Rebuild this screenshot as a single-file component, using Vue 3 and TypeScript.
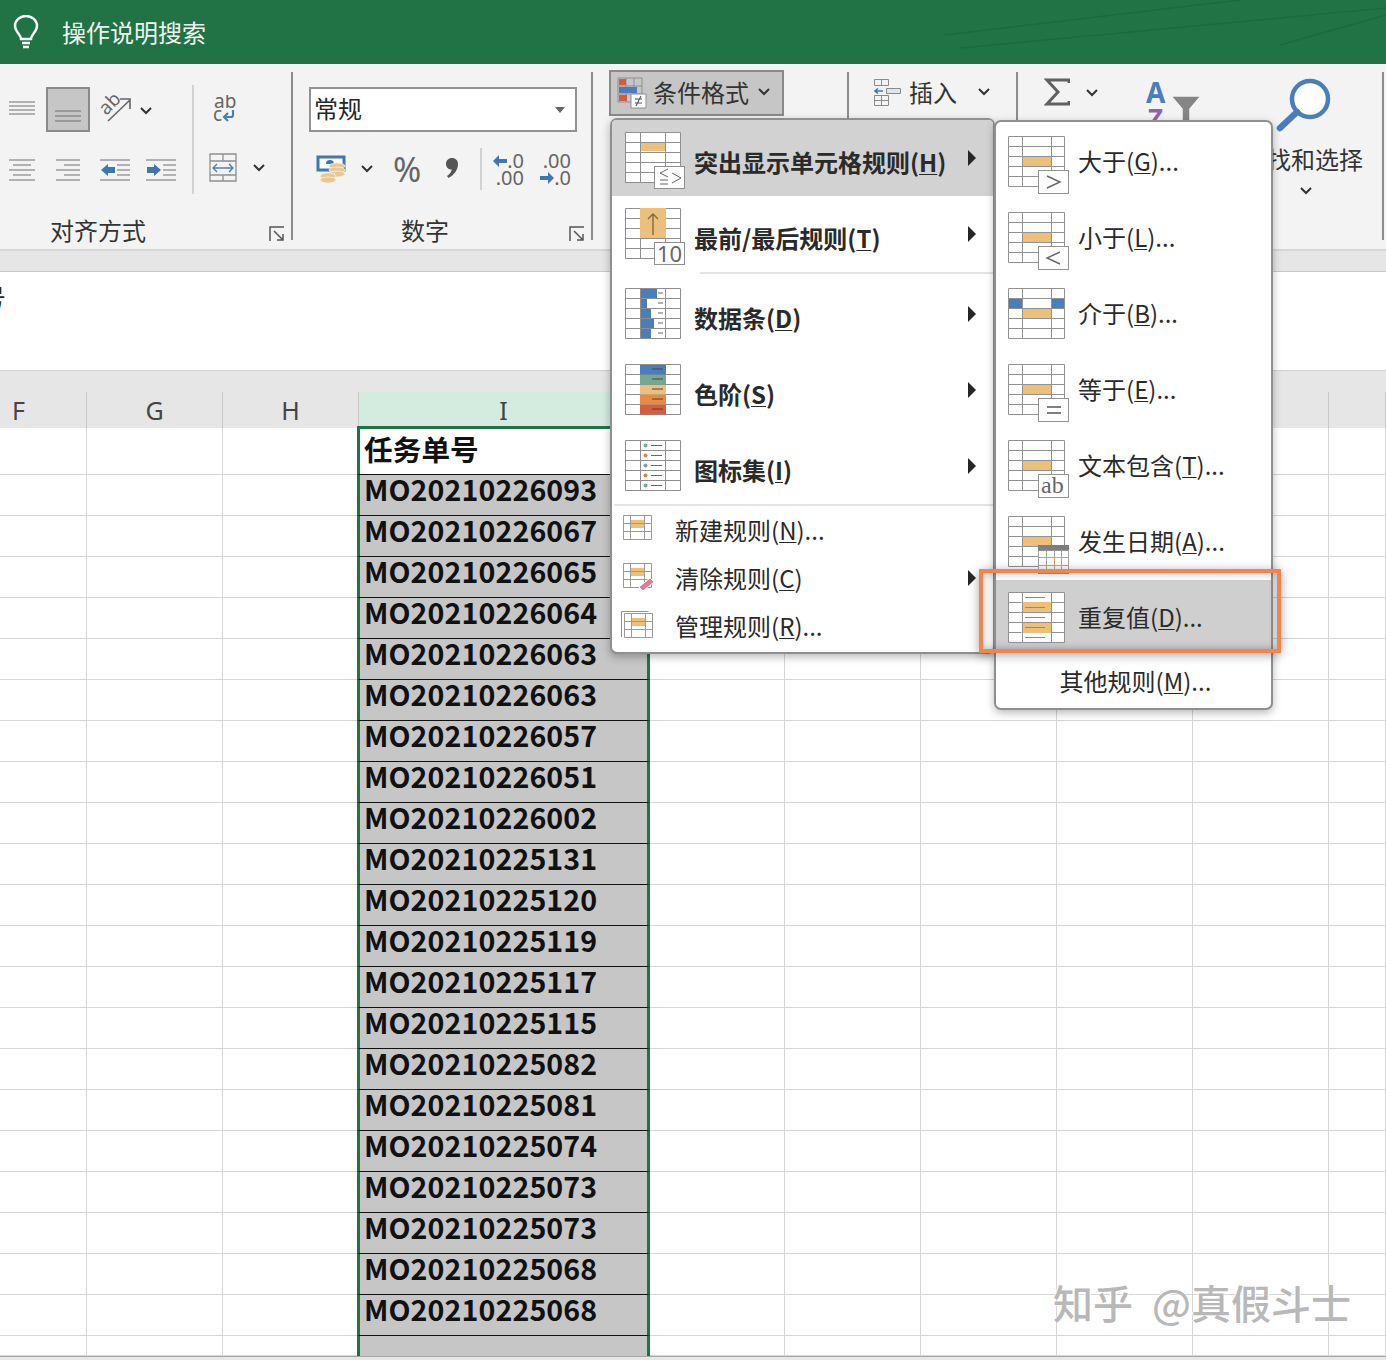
<script setup lang="ts">
interface MenuItem { label: string; key: string; tail: string; icon: string; arrow?: boolean }

const mainItems: MenuItem[] = [
  { label: '突出显示单元格规则(', key: 'H', tail: ')', icon: 'cells', arrow: true },
  { label: '最前/最后规则(', key: 'T', tail: ')', icon: 'top', arrow: true },
  { label: '数据条(', key: 'D', tail: ')', icon: 'bars', arrow: true },
  { label: '色阶(', key: 'S', tail: ')', icon: 'scale', arrow: true },
  { label: '图标集(', key: 'I', tail: ')', icon: 'dots', arrow: true },
]
const subItems: MenuItem[] = [
  { label: '大于(', key: 'G', tail: ')...', icon: 'gt' },
  { label: '小于(', key: 'L', tail: ')...', icon: 'lt' },
  { label: '介于(', key: 'B', tail: ')...', icon: 'between' },
  { label: '等于(', key: 'E', tail: ')...', icon: 'eq' },
  { label: '文本包含(', key: 'T', tail: ')...', icon: 'ab' },
  { label: '发生日期(', key: 'A', tail: ')...', icon: 'date' },
  { label: '重复值(', key: 'D', tail: ')...', icon: 'dup' },
]
const smallItems: MenuItem[] = [
  { label: '新建规则(', key: 'N', tail: ')...', icon: 'new' },
  { label: '清除规则(', key: 'C', tail: ')', icon: 'clear', arrow: true },
  { label: '管理规则(', key: 'R', tail: ')...', icon: 'manage' },
]

const columns = [
  { name: 'F', w: 87 }, { name: 'G', w: 136 }, { name: 'H', w: 136 }, { name: 'I', w: 290 },
  { name: 'J', w: 136 }, { name: 'K', w: 136 }, { name: 'L', w: 136 }, { name: 'M', w: 136 },
  { name: 'N', w: 136 }, { name: '', w: 57 },
]
const gridCols = columns.map(c => c.w + 'px').join(' ')

const codes = ['MO20210226093','MO20210226067','MO20210226065','MO20210226064','MO20210226063','MO20210226063','MO20210226057','MO20210226051','MO20210226002','MO20210225131','MO20210225120','MO20210225119','MO20210225117','MO20210225115','MO20210225082','MO20210225081','MO20210225074','MO20210225073','MO20210225073','MO20210225068','MO20210225068']
const rows = [
  { text: '任务单号', kind: 'head' },
  ...codes.map(text => ({ text, kind: 'data' })),
  { text: '', kind: 'last' },
]
const yellow = '#ebc07a'
const blueBars = [16, 6, 10, 13, 10]
const scaleColors = ['#4a7ebb', '#72a991', '#ebc07a', '#ec8a3b', '#d95b3f']
const dotColors = ['#74a596', '#d0844f', '#74a596', '#d0844f', '#74a596']
</script>

<template>
  <div class="page">
    <header class="titlebar">
      <svg class="bulb" width="28" height="34" viewBox="0 0 28 34" fill="none" stroke="#fff" stroke-width="2.4">
        <path d="M9 24c0-5-6-7-6-13a11 10 0 0 1 22 0c0 6-6 8-6 13z" />
        <path d="M10 28h8M11 32h6" />
      </svg>
      <span class="search">操作说明搜索</span>
      <svg class="decor" width="456" height="64" viewBox="0 0 456 64" fill="none" stroke="#1c6a3f" stroke-width="1.5">
        <path d="M15 35 310 0M30 48 456 8M350 45 456 15" />
      </svg>
    </header>

    <section class="ribbon">
      <div class="group align-group">
        <div class="tools">
          <div class="tool-col">
            <div class="tool-row row-top">
              <svg class="t1" width="26" height="16" viewBox="0 0 26 16" stroke="#9c9c9c" stroke-width="1.4"><path d="M0 2H26M0 6H26M0 10H26M0 14H26" /></svg>
              <div class="pressed">
                <svg width="26" height="16" viewBox="0 0 26 16" stroke="#8a8a8a" stroke-width="1.4"><path d="M0 2H26M0 7H26M0 12H26" /></svg>
              </div>
              <svg class="t3" width="32" height="30" viewBox="0 0 32 30" fill="none">
                <text x="0" y="18" font-size="19" fill="#666" transform="rotate(-45 9 13)" class="svg-text">ab</text>
                <path d="M8 28 30 7M20 6h10v10" stroke="#666" stroke-width="1.6" />
              </svg>
              <svg class="chev t4" width="12" height="8" viewBox="0 0 12 8"><path d="M1 1l5 5 5-5" /></svg>
            </div>
            <div class="tool-row row-bottom">
              <svg width="26" height="24" viewBox="0 0 26 24" stroke="#9c9c9c" stroke-width="1.4"><path d="M0 2H26M4 7H22M0 12H26M4 17H22M0 22H26" /></svg>
              <svg class="m21" width="24" height="24" viewBox="0 0 24 24" stroke="#9c9c9c" stroke-width="1.4"><path d="M0 2H24M8 7H24M0 12H24M8 17H24M0 22H24" /></svg>
              <svg class="m20" width="30" height="24" viewBox="0 0 30 24" fill="none">
                <path d="M0 2H30M17 7H30M17 12H30M17 17H30M0 22H30" stroke="#9c9c9c" stroke-width="1.4" />
                <path d="M8 6 1 12l7 6v-3h7V9H8z" fill="#3f78b0" />
              </svg>
              <svg class="m16" width="30" height="24" viewBox="0 0 30 24" fill="none">
                <path d="M0 2H30M17 7H30M17 12H30M17 17H30M0 22H30" stroke="#9c9c9c" stroke-width="1.4" />
                <path d="M8 6l7 6-7 6v-3H1V9h7z" fill="#3f78b0" />
              </svg>
            </div>
          </div>
          <div class="tool-side">
            <svg class="wrap" width="24" height="28" viewBox="0 0 24 28" fill="none">
              <text x="1" y="13" font-size="19" fill="#666" class="svg-text">ab</text>
              <text x="0" y="26" font-size="19" fill="#666" class="svg-text">c</text>
              <path d="M20 15v5a2 2 0 0 1-2 2h-7m4-4-4 4 4 4" stroke="#4a7ebb" stroke-width="2.2" />
            </svg>
            <div class="merge-row">
              <svg width="28" height="30" viewBox="0 0 28 30" fill="none">
                <path d="M1 1h26v27H1zM1 8h26M1 22h26M14 1v7M14 22v6" stroke="#8f8f8f" stroke-width="1.3" />
                <path d="M4 15h20M8 11l-4 4 4 4M20 11l4 4-4 4" stroke="#4a7ebb" stroke-width="1.3" />
              </svg>
              <svg class="chev" width="12" height="8" viewBox="0 0 12 8"><path d="M1 1l5 5 5-5" /></svg>
            </div>
          </div>
        </div>
        <div class="group-label label-align">
          <span>对齐方式</span>
          <svg class="launch" width="16" height="16" viewBox="0 0 16 16" fill="none" stroke="#555" stroke-width="1.5"><path d="M1 15V1h14M5 5l9 9M14 8v6H8" /></svg>
        </div>
      </div>

      <div class="group number-group">
        <div class="combo">
          <span>常规</span>
          <svg width="10" height="6" viewBox="0 0 10 6"><path d="M0 0h10L5 6z" fill="#666" /></svg>
        </div>
        <div class="num-row">
          <svg class="money" width="32" height="30" viewBox="0 0 32 30" fill="none">
            <path d="M2 2h26v13H2z" fill="#fff" stroke="#3f78b0" stroke-width="3" />
            <path d="M10 9a4 4 0 0 1 8 0z" fill="#3f78b0" />
            <g fill="#e9c795" stroke="#f7f0e2" stroke-width=".8">
              <ellipse cx="21" cy="11" rx="8" ry="3" />
              <ellipse cx="21" cy="15" rx="8" ry="3" />
              <ellipse cx="21" cy="19" rx="8" ry="3" />
              <ellipse cx="12" cy="21" rx="8" ry="3" />
              <ellipse cx="12" cy="25" rx="8" ry="3" />
            </g>
          </svg>
          <svg class="chev n-chev" width="12" height="8" viewBox="0 0 12 8"><path d="M1 1l5 5 5-5" /></svg>
          <span class="percent">%</span>
          <svg class="comma" width="12" height="20" viewBox="0 0 12 20"><path d="M6 0c3.500 0 6 2.500 6 6 0 6-4 11-9.500 14L1 18c3-2 4.500-4.500 4.800-6.500C2.500 11.500 0 9.500 0 6c0-3.500 2.500-6 6-6z" fill="#555" /></svg>
          <i class="inner-sep"></i>
          <div class="dec dec-a">
            <div><svg width="14" height="12" viewBox="0 0 14 12"><path d="M6 0 0 6l6 6V8h8V4H6z" fill="#3f78b0" /></svg>.0</div>
            <div>.00</div>
          </div>
          <div class="dec dec-b">
            <div>.00</div>
            <div><svg width="14" height="12" viewBox="0 0 14 12"><path d="m8 0 6 6-6 6V8H0V4h8z" fill="#3f78b0" /></svg>.0</div>
          </div>
        </div>
        <div class="group-label label-number">
          <span>数字</span>
          <svg class="launch" width="16" height="16" viewBox="0 0 16 16" fill="none" stroke="#555" stroke-width="1.5"><path d="M1 15V1h14M5 5l9 9M14 8v6H8" /></svg>
        </div>
      </div>

      <div class="group styles-group">
        <button class="cond">
          <svg width="32" height="32" viewBox="0 0 32 32" fill="none">
            <path d="M1 1h24v24H1zM1 9h24M1 17h24M9 1v24M17 1v24" stroke="#8f8f8f" />
            <path d="M2 2h7v6H2z" fill="#d9593d" />
            <path d="M2 10h18v6H2z" fill="#4a7ebb" />
            <path d="M2 18h8v6H2z" fill="#d9593d" />
            <path d="M14 17h15v14H14z" fill="#fff" stroke="#8f8f8f" />
            <path d="M18 22h7M18 26h7M24 19l-5 10" stroke="#555" stroke-width="1.100" />
          </svg>
          <span>条件格式</span>
          <svg class="chev" width="12" height="8" viewBox="0 0 12 8"><path d="M1 1l5 5 5-5" /></svg>
        </button>
      </div>

      <div class="group cells-group">
        <div class="insert">
          <svg width="27" height="27" viewBox="0 0 27 27" fill="none">
            <path d="M.5.5h14v6H.5zM7.500.5v6M.5 16.500h14v10H.5zM.5 21.500h14M7.500 16.500v10" stroke="#8a8a8a" />
            <path d="M12.500 9.500h14v5h-14z" fill="#dfe6ee" stroke="#8a8a8a" />
            <path d="M1 12h8M4 9.500 1 12l3 2.500" stroke="#3f78b0" stroke-width="1.600" />
          </svg>
          <span>插入</span>
          <svg class="chev" width="12" height="8" viewBox="0 0 12 8"><path d="M1 1l5 5 5-5" /></svg>
        </div>
      </div>

      <div class="group edit-group">
        <svg class="sigma" width="26" height="28" viewBox="0 0 26 28" fill="none" stroke="#606060" stroke-width="3"><path d="M25 5V2H3l11 12L3 26h22v-3" /></svg>
        <svg class="chev sum-chev" width="12" height="8" viewBox="0 0 12 8"><path d="M1 1l5 5 5-5" /></svg>
        <div class="sort">
          <span class="sort-a">A</span>
          <span class="sort-z">Z</span>
          <svg class="funnel" width="32" height="34" viewBox="0 0 32 34"><path d="M1 1h30L20 14v20h-8V14z" fill="#858585" stroke="#f3f3f3" stroke-width="1.500" /></svg>
        </div>
        <div class="find">
          <svg width="60" height="56" viewBox="0 0 60 56" fill="none">
            <circle cx="37" cy="21" r="18" fill="#fff" stroke="#4a7ebb" stroke-width="4.500" />
            <path d="M24 34 7 50" stroke="#4a7ebb" stroke-width="6.500" stroke-linecap="round" />
          </svg>
          <span>查找和选择</span>
          <svg class="chev" width="12" height="8" viewBox="0 0 12 8"><path d="M1 1l5 5 5-5" /></svg>
        </div>
      </div>
    </section>

    <div class="band-a"></div>
    <div class="formula"><span>任务单号</span></div>
    <div class="band-b"></div>

    <div class="col-head" :style="{ gridTemplateColumns: gridCols }">
      <div v-for="c in columns" :key="c.name" class="head-cell" :class="{ on: c.name === 'I' }">{{ c.name }}</div>
    </div>

    <div class="sheet" :style="{ gridTemplateColumns: gridCols }">
      <template v-for="(r, ri) in rows" :key="ri">
        <div
          v-for="c in columns"
          :key="c.name"
          class="cell"
          :class="[r.kind, { sel: c.name === 'I' }]"
        >
          <template v-if="c.name === 'I'">{{ r.text }}</template>
        </div>
      </template>
    </div>
    <div class="sheet-end"></div>

    <!-- left dropdown -->
    <div class="menu menu-main">
      <template v-for="(m, i) in mainItems" :key="m.label">
        <div v-if="i === 2" class="div-short"></div>
        <div class="item" :class="{ hot: i === 0 }">
          <svg class="ic" width="62" height="58" viewBox="0 0 62 58" fill="none">
            <rect x=".5" y=".5" width="55" height="50" fill="#fff" />
            <rect v-if="m.icon === 'cells'" x="15" y="10" width="25" height="9" :fill="yellow" />
            <path d="M.5.5h55v50H.5zM.5 10.500h55M.5 20.500h55M.5 30.500h55M.5 40.500h55M15.500.5v50M40.500.5v50" stroke="#8f8f8f" />
            <rect v-if="m.icon === 'top'" x="15" y="0" width="26" height="30" :fill="yellow" />
            <template v-if="m.icon === 'bars'">
              <rect v-for="(w, b) in blueBars" :key="b" x="16" :y="b * 10 + 1" :width="w" height="9" fill="#4a7ebb" />
            </template>
            <template v-if="m.icon === 'scale'">
              <rect v-for="(col, b) in scaleColors" :key="b" x="15" :y="b * 10 + 1" width="26" height="9.500" :fill="col" />
            </template>
            <template v-if="m.icon === 'cells' || m.icon === 'top'">
              <rect x="29.500" y="34.500" width="30" height="22" fill="#fff" stroke="#8f8f8f" />
            </template>
            <path v-if="m.icon === 'cells'" d="M43 37l-8 4 8 4M35 48h8M35 52h8M47 41l9 5-9 5" stroke="#666" />
            <path v-if="m.icon === 'top'" d="M28 27V6M23 11l5-5 5 5" stroke="#7a6a50" stroke-width="1.400" />
            <text v-if="m.icon === 'top'" x="32" y="54" font-size="22" fill="#666" class="svg-text">10</text>
            <path v-if="m.icon === 'bars'" d="M33 5h5M33 15h5M33 25h5M33 35h5M33 45h5" stroke="#666" />
            <path v-if="m.icon === 'scale'" d="M27 5h11M27 15h11M27 25h11M27 35h11M27 45h11" stroke="#444" />
            <template v-if="m.icon === 'dots'">
              <circle v-for="(col, b) in dotColors" :key="b" cx="20.500" :cy="5.500 + b * 10" r="2" :fill="col" />
              <path d="M26 5.500h11M26 15.500h11M26 25.500h11M26 35.500h11M26 45.500h11" stroke="#666" />
            </template>
          </svg>
          <span class="txt bold">{{ m.label }}<u>{{ m.key }}</u>{{ m.tail }}</span>
          <i class="tri"></i>
        </div>
      </template>
      <div class="div-full"></div>
      <div v-for="m in smallItems" :key="m.label" class="small">
        <svg class="sm-ic" width="36" height="30" viewBox="0 0 36 30" fill="none">
          <path v-if="m.icon === 'manage'" d="M2.500 26V.5h27" stroke="#8f8f8f" />
          <g :transform="m.icon === 'manage' ? 'translate(1 2)' : ''">
            <rect x="11" y="5" width="14" height="8" :fill="yellow" />
            <path d="M4.500.5h28v24h-28zM4.500 8.500h28M4.500 16.500h28M11.500.5v24M25.500.5v24" stroke="#999" />
          </g>
          <path v-if="m.icon === 'clear'" d="m20 24 11-9 4 4-11 9z" fill="#e6788f" stroke="#fff" />
        </svg>
        <span class="txt">{{ m.label }}<u>{{ m.key }}</u>{{ m.tail }}</span>
        <i v-if="m.arrow" class="tri"></i>
      </div>
    </div>

    <!-- right fly-out -->
    <div class="menu menu-sub">
      <div v-for="m in subItems" :key="m.label" class="sub" :class="{ hot: m.icon === 'dup' }">
        <svg class="ic" width="64" height="60" viewBox="0 0 64 60" fill="none">
          <rect x=".5" y=".5" width="56" height="50" fill="#fff" />
          <template v-if="m.icon === 'dup'">
            <rect x="14" y="10" width="29" height="10" :fill="yellow" />
            <rect x="14" y="31" width="29" height="10" :fill="yellow" />
          </template>
          <rect v-else x="14" y="20" width="29" height="10" :fill="yellow" />
          <template v-if="m.icon === 'between'">
            <rect x="0" y="10" width="14" height="10" fill="#4a7ebb" />
            <rect x="43" y="10" width="14" height="10" fill="#4a7ebb" />
          </template>
          <path v-if="m.icon === 'dup'" d="M.5.5h56v50H.5zM14.500.5v50M43.500.5v50M.5 10.500h13M43.500 10.500h13M.5 20.500h56M.5 30.500h56M.5 40.500h13M43.500 40.500h13" stroke="#929292" />
          <path v-else d="M.5.5h56v50H.5zM.5 10.500h56M.5 20.500h56M.5 30.500h56M.5 40.500h56M14.500.5v50M43.500.5v50" stroke="#929292" />
          <path v-if="m.icon === 'dup'" d="M17 5.500h20M17 15.500h20M17 25.500h20M17 35.500h20M17 45.500h20" stroke="#8a8a8a" />
          <template v-if="['gt','lt','eq','ab','date'].includes(m.icon)">
            <rect x="30.500" y="34.500" width="30" height="23" fill="#fff" stroke="#929292" />
          </template>
          <path v-if="m.icon === 'gt'" d="m39 40 13 6-13 6" stroke="#666" stroke-width="1.400" />
          <path v-if="m.icon === 'lt'" d="m52 40-13 6 13 6" stroke="#666" stroke-width="1.400" />
          <path v-if="m.icon === 'eq'" d="M39 43h14M39 49h14" stroke="#555" stroke-width="1.600" />
          <text v-if="m.icon === 'ab'" x="33" y="53" font-size="24" fill="#666" class="svg-serif">ab</text>
          <template v-if="m.icon === 'date'">
            <rect x="30" y="29" width="31" height="5" fill="#7e7e7e" />
            <path d="M30.500 34v23h30V34M30.500 41.500h30M30.500 49.500h30M38.500 34v23M46.500 34v23M53.500 34v23" stroke="#a5a5a5" />
            <rect x="46.500" y="41.500" width="7" height="8" fill="#fff" stroke="#d9a441" />
          </template>
        </svg>
        <span class="txt">{{ m.label }}<u>{{ m.key }}</u>{{ m.tail }}</span>
      </div>
      <div class="other"><span class="txt">其他规则(<u>M</u>)...</span></div>
    </div>

    <div class="focus-frame"></div>

    <div class="watermark">知乎 @真假斗士</div>
  </div>
</template>

<style>
html, body { margin: 0; background: #fff; overflow: hidden; }
</style>

<style scoped>
.page {
  position: relative;
  width: 1386px;
  height: 1360px;
  overflow: hidden;
  background: #fff;
  font-family: "Noto Sans CJK SC", "Noto Sans", sans-serif;
  color: #262626;
}
svg { display: block; flex: none; }
.svg-text { font-family: "Noto Sans", sans-serif; }
.svg-serif { font-family: "Liberation Serif", serif; }
.chev path { fill: none; stroke: #333; stroke-width: 2; }

.titlebar {
  position: relative;
  height: 64px;
  background: #217346;
  display: flex;
  align-items: center;
  overflow: hidden;
}
.bulb { margin-left: 12px; }
.search { margin-left: 22px; font-size: 24px; color: #eef5f0; line-height: 32px; }
.decor { position: absolute; left: 930px; top: 0; }

.ribbon {
  height: 185px;
  background: #f3f3f3;
  display: flex;
  align-items: flex-start;
}
.group {
  box-sizing: border-box;
  height: 168px;
  margin-top: 8px;
  border-right: 2px solid #8c8c8c;
  flex: none;
}
.align-group { width: 293px; }
.tools { display: flex; padding-top: 15px; height: 122px; box-sizing: border-box; }
.tool-col { width: 192px; }
.tool-row { display: flex; align-items: center; padding-left: 9px; }
.row-top { height: 45px; }
.row-bottom { height: 40px; margin-top: 18px; }
.t1 { margin-top: -4px; }
.pressed {
  box-sizing: border-box;
  width: 44px;
  height: 45px;
  margin-left: 11px;
  background: #c6c6c6;
  border: 2px solid #8a8a8a;
  display: flex;
  justify-content: center;
  align-items: flex-end;
  padding-bottom: 5px;
}
.pressed svg { width: 26px; }
.t3 { margin-left: 10px; margin-top: -4px; }
.t4 { margin-left: 8px; margin-top: 2px; }
.m21 { margin-left: 21px; }
.m20 { margin-left: 20px; }
.m16 { margin-left: 16px; }
.tool-side {
  box-sizing: border-box;
  width: 99px;
  height: 109px;
  margin-top: -2px;
  border-left: 2px solid #d2d2d2;
  padding-left: 15px;
}
.wrap { margin: 10px 0 0 4px; }
.merge-row { display: flex; align-items: center; gap: 16px; margin-top: 30px; }
.group-label {
  display: flex;
  align-items: center;
  justify-content: space-between;
  height: 34px;
  margin-top: 19px;
  font-size: 24px;
  line-height: 34px;
  color: #333;
}
.label-align { padding-left: 50px; padding-right: 6px; }
.launch { margin-top: 7px; }

.number-group { width: 300px; padding-left: 16px; }
.combo {
  box-sizing: border-box;
  width: 268px;
  height: 45px;
  margin-top: 15px;
  background: #fff;
  border: 2px solid #929292;
  display: flex;
  align-items: center;
  justify-content: space-between;
  padding: 0 10px 0 3px;
  font-size: 24px;
}
.combo span { margin-top: -4px; }
.num-row { display: flex; align-items: center; height: 44px; margin-top: 15px; padding-left: 7px; color: #666; }
.money { margin-top: 2px; }
.n-chev { margin-left: 13px; }
.percent { margin-left: 20px; font-size: 34px; font-family: "Noto Sans", sans-serif; line-height: 44px; width: 29px; }
.comma { margin-left: 24px; margin-top: -2px; }
.inner-sep { display: block; width: 2px; height: 42px; background: #d2d2d2; margin-left: 22px; }
.dec { font-size: 20px; line-height: 16px; width: 30px; text-align: right; font-family: "Noto Sans", sans-serif; }
.dec div { display: flex; justify-content: flex-end; align-items: center; height: 17px; }
.dec-a { margin-left: 12px; }
.dec-b { margin-left: 17px; }
.label-number { padding-left: 92px; padding-right: 6px; margin-top: 22px; }

.styles-group { width: 256px; padding-left: 16px; }
.cond {
  box-sizing: border-box;
  width: 175px;
  height: 46px;
  margin-top: -2px;
  padding: 0 0 0 6px;
  background: #c6c6c6;
  border: 2px solid #8a8a8a;
  display: flex;
  align-items: center;
  font: inherit;
  font-size: 24px;
  color: #333;
}
.cond span { margin: -4px 0 0 4px; }
.cond .chev { margin-left: 9px; margin-top: -2px; }

.cells-group { width: 169px; }
.insert { display: flex; align-items: center; height: 40px; padding-left: 25px; font-size: 24px; color: #333; }
.insert span { margin: -2px 0 0 8px; }
.insert .chev { margin-left: 21px; }

.edit-group { width: 366px; display: flex; align-items: flex-start; padding-left: 26px; }
.sigma { margin-top: 6px; }
.sum-chev { margin: 17px 0 0 16px; }
.sort { position: relative; width: 56px; height: 60px; margin-left: 48px; }
.sort-a { position: absolute; left: 0; top: 2px; font: 700 28px/36px "Noto Sans", sans-serif; color: #4a7ebb; }
.sort-z { position: absolute; left: 2px; top: 29px; font: 700 26px/34px "Noto Sans", sans-serif; color: #8f62ad; }
.funnel { position: absolute; left: 24px; top: 23px; }
.find { width: 120px; margin-left: 41px; display: flex; flex-direction: column; align-items: center; font-size: 24px; color: #333; }
.find svg:first-child { margin-top: 6px; }
.find span { line-height: 32px; margin-top: 9px; white-space: nowrap; }
.find .chev { margin: 12px 0 0 6px; }

.band-a { height: 20px; background: #e6e6e6; border-top: 2px solid #d6d6d6; border-bottom: 1px solid #c8c8c8; }
.formula { height: 98px; background: #fff; position: relative; overflow: hidden; font-size: 26px; }
.formula span { position: absolute; right: 1380px; top: 6px; white-space: nowrap; }
.band-b { height: 21px; background: #e6e6e6; border-top: 1px solid #d0d0d0; }

.col-head { display: grid; height: 36px; background: #e6e6e6; }
.head-cell {
  box-sizing: border-box;
  border-right: 1px solid #c8c8c8;
  text-align: center;
  font: 25px/36px "Noto Sans", sans-serif;
  color: #444;
}
.head-cell:first-child { text-align: left; padding-left: 12px; }
.head-cell.on { background: #d3ecdf; }

.sheet { display: grid; grid-template-rows: 47px repeat(21, 41px) 20px; }
.cell { box-sizing: border-box; border-right: 1px solid #d6d6d6; border-bottom: 1px solid #d6d6d6; min-width: 0; }
.cell.sel {
  margin-left: -2px;
  margin-right: -1px;
  border-left: 3px solid #217346;
  border-right: 3px solid #217346;
  border-bottom: 1px solid #111;
  background: #c6c6c6;
  padding-left: 4px;
  font-weight: 700;
  font-size: 28.6px;
  line-height: 27px;
  color: #111;
  white-space: nowrap;
  z-index: 1;
  letter-spacing: .1px;
}
.cell.sel.head {
  margin-top: -2px;
  border-top: 3px solid #217346;
  background: #fff;
  line-height: 40px;
}
.cell.sel.last { border-bottom: 0; }
.sheet-end { height: 4px; background: #e6e6e6; border-top: 1px solid #a8a8a8; box-sizing: border-box; }

.menu {
  position: absolute;
  z-index: 2;
  box-sizing: border-box;
  background: #fff;
  border: 2px solid #8f8f8f;
  border-radius: 7px;
  box-shadow: 0 3px 8px rgba(0, 0, 0, .28);
  font-size: 24px;
}
.menu-main { left: 610px; top: 118px; width: 385px; height: 536px; }
.menu-sub { left: 994px; top: 120px; width: 279px; height: 590px; padding-top: 2px; }
.txt { line-height: 32px; white-space: nowrap; color: #2a2a2a; }
.bold { font-weight: 700; }
u { text-underline-offset: 2px; text-decoration-thickness: 1px; }

.item {
  position: relative;
  display: flex;
  align-items: flex-start;
  height: 76px;
  padding: 12px 0 0 13px;
  box-sizing: border-box;
}
.item.hot { background: #d2d2d2; margin: 0; border-radius: 4px 4px 0 0; }
.item .txt { margin: 14px 0 0 7px; }
.tri {
  position: absolute;
  left: 356px;
  top: 30px;
  width: 0;
  height: 0;
  border-left: 8px solid #262626;
  border-top: 8px solid transparent;
  border-bottom: 8px solid transparent;
}
.div-short { height: 2px; margin: 0 0 2px 88px; background: #e4e4e4; }
.div-full { height: 2px; margin: 0 0 0 2px; background: #e4e4e4; }
.small { position: relative; display: flex; align-items: center; height: 48px; padding-left: 7px; }
.small .txt { margin-left: 20px; }
.small .tri { top: 16px; }

.sub {
  box-sizing: border-box;
  display: flex;
  align-items: flex-start;
  height: 76px;
  padding: 12px 0 0 12px;
}
.sub .txt { margin: 9px 0 0 6px; }
.sub.hot { background: #cfcfcf; height: 70px; padding-top: 12px; }
.other { margin-top: 6px; height: 52px; text-align: center; line-height: 50px; padding-left: 4px; }

.focus-frame {
  position: absolute;
  z-index: 3;
  left: 979px;
  top: 569px;
  width: 302px;
  height: 84px;
  box-sizing: border-box;
  border: 4px solid #f0854d;
  box-shadow: 0 2px 10px rgba(0, 0, 0, .35), inset 0 0 8px rgba(0, 0, 0, .3);
}

.watermark {
  position: absolute;
  left: 1053px;
  top: 1274px;
  font-size: 40px;
  line-height: 56px;
  white-space: nowrap;
  word-spacing: 10px;
  color: #b8b8b8;
  font-weight: 500;
  text-shadow: 1px 1px 0 #fff, -1px 0 0 #fff;
  z-index: 3;
}
</style>
